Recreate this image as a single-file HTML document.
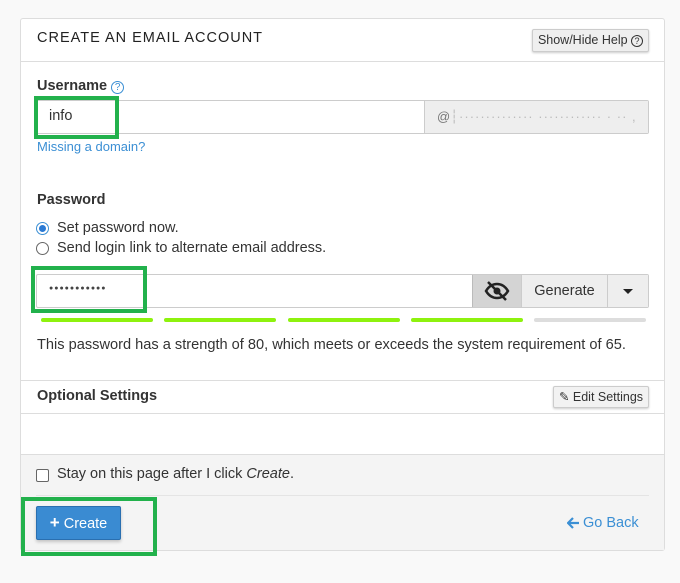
<!DOCTYPE html>
<html><head><style>
*{margin:0;padding:0;box-sizing:border-box}
body{width:680px;height:583px;background:#f9f9f9;font-family:"Liberation Sans",sans-serif;color:#333;position:relative;overflow:hidden;font-size:14.5px}
.a{position:absolute}
.panel{left:20px;top:18px;width:645px;height:533px;background:#fff;border:1px solid #ddd;border-radius:3px}
.g{border:4px solid #22b14c}
.bar{height:4px;border-radius:2px;top:318px;width:112px}
</style></head><body>
<div class="a panel"></div>
<div class="a" style="left:37px;top:30px;font-size:14.5px;letter-spacing:1px;color:#222">CREATE AN EMAIL ACCOUNT</div>
<div class="a" style="left:532px;top:29px;width:117px;height:23px;background:#efefef;border:1px solid #ccc;border-radius:2px;font-size:12.5px;line-height:21px;text-align:center;box-shadow:0 1px 2px rgba(0,0,0,.2)">Show/Hide Help <span style="display:inline-block;width:12px;height:12px;border:1px solid #333;border-radius:50%;font-size:9px;line-height:10px">?</span></div>
<div class="a" style="left:21px;top:61px;width:643px;border-top:1px solid #ddd"></div>
<div class="a" style="left:37px;top:78px;font-size:14.5px;font-weight:bold;color:#333">Username <span style="display:inline-block;width:13px;height:13px;border:1px solid #3b8fd4;border-radius:50%;color:#3b8fd4;font-size:10px;line-height:11px;text-align:center;font-weight:normal">?</span></div>
<div class="a" style="left:36px;top:100px;width:613px;height:34px;border:1px solid #ccc;border-radius:2px;background:#fff"></div>
<div class="a" style="left:424px;top:101px;width:224px;height:32px;background:#eee;border-left:1px solid #ccc;font-size:13px;color:#777;line-height:32px;padding-left:12px">@<span style="color:#bbb;letter-spacing:1px">┆·············· ············ ·  ·· ,</span></div>
<div class="a g" style="left:34px;top:96px;width:85px;height:43px"></div>
<div class="a" style="left:49px;top:108px">info</div>
<div class="a" style="left:37px;top:139px;font-size:13px;color:#3b8fd4">Missing a domain?</div>
<div class="a" style="left:37px;top:192px;font-weight:bold">Password</div>
<div class="a" style="left:36px;top:222px;width:13px;height:13px;border:1px solid #3b8fd4;border-radius:50%;background:#fff"><div style="margin:2px;width:7px;height:7px;border-radius:50%;background:#2a7ad4"></div></div>
<div class="a" style="left:57px;top:220px">Set password now.</div>
<div class="a" style="left:36px;top:242px;width:13px;height:13px;border:1px solid #666;border-radius:50%;background:#fff"></div>
<div class="a" style="left:57px;top:240px">Send login link to alternate email address.</div>
<div class="a" style="left:36px;top:274px;width:613px;height:34px;border:1px solid #ccc;border-radius:2px;background:#fff"></div>
<div class="a" style="left:472px;top:275px;width:49px;height:32px;background:#d4d4d4;border-left:1px solid #bbb"></div>
<svg class="a" style="left:484px;top:280px" width="26" height="22" viewBox="0 0 26 22"><path d="M2 11c3-5 7-7 11-7s8 2 11 7c-3 5-7 7-11 7S5 16 2 11z" fill="none" stroke="#222" stroke-width="2.5"/><circle cx="13" cy="11" r="3.5" fill="#222"/><line x1="4" y1="2" x2="22" y2="20" stroke="#222" stroke-width="2.5"/></svg>
<div class="a" style="left:521px;top:275px;width:86px;height:32px;background:#eee;border-left:1px solid #ccc;line-height:32px;text-align:center">Generate</div>
<div class="a" style="left:607px;top:275px;width:41px;height:32px;background:#eee;border-left:1px solid #ccc"></div>
<div class="a" style="left:623px;top:289px;border-left:5px solid transparent;border-right:5px solid transparent;border-top:5px solid #222"></div>
<div class="a g" style="left:31px;top:266px;width:116px;height:47px"></div>
<div class="a" style="left:49px;top:285px;font-size:7px;letter-spacing:1px;color:#444">●●●●●●●●●●●</div>
<div class="a bar" style="left:41px;background:#8ef20e"></div>
<div class="a bar" style="left:164px;background:#8ef20e"></div>
<div class="a bar" style="left:288px;background:#8ef20e"></div>
<div class="a bar" style="left:411px;background:#8ef20e"></div>
<div class="a bar" style="left:534px;background:#ddd"></div>
<div class="a" style="left:37px;top:337px;font-size:14.6px">This password has a strength of 80, which meets or exceeds the system requirement of 65.</div>
<div class="a" style="left:21px;top:380px;width:643px;border-top:1px solid #ddd"></div>
<div class="a" style="left:37px;top:388px;font-weight:bold">Optional Settings</div>
<div class="a" style="left:553px;top:386px;width:96px;height:22px;background:#f2f2f2;border:1px solid #ccc;border-radius:2px;font-size:12.5px;line-height:20px;text-align:center;box-shadow:0 1px 2px rgba(0,0,0,.2)">✎ Edit Settings</div>
<div class="a" style="left:21px;top:413px;width:643px;border-top:1px solid #ddd"></div>
<div class="a" style="left:21px;top:454px;width:643px;height:96px;background:#f4f4f4;border-top:1px solid #ddd"></div>
<div class="a" style="left:36px;top:469px;width:13px;height:13px;border:1px solid #666;border-radius:2px;background:#fff"></div>
<div class="a" style="left:57px;top:466px">Stay on this page after I click <i>Create</i>.</div>
<div class="a" style="left:36px;top:495px;width:613px;border-top:1px solid #e4e4e4"></div>
<div class="a g" style="left:21px;top:497px;width:136px;height:59px"></div>
<div class="a" style="left:36px;top:506px;width:85px;height:34px;background:#3a8bd2;border:1px solid #2a6fb0;border-radius:2px;color:#fff;line-height:32px;text-align:center;box-shadow:0 2px 3px rgba(0,0,0,.2)"><b style="font-size:17px">+</b> Create</div>
<svg class="a" style="left:567px;top:517px" width="13" height="12" viewBox="0 0 13 12"><path d="M6 1L1 6l5 5M1 6h11" fill="none" stroke="#3b8fd4" stroke-width="2.2"/></svg>
<div class="a" style="left:583px;top:515px;color:#3b8fd4">Go Back</div>
</body></html>
